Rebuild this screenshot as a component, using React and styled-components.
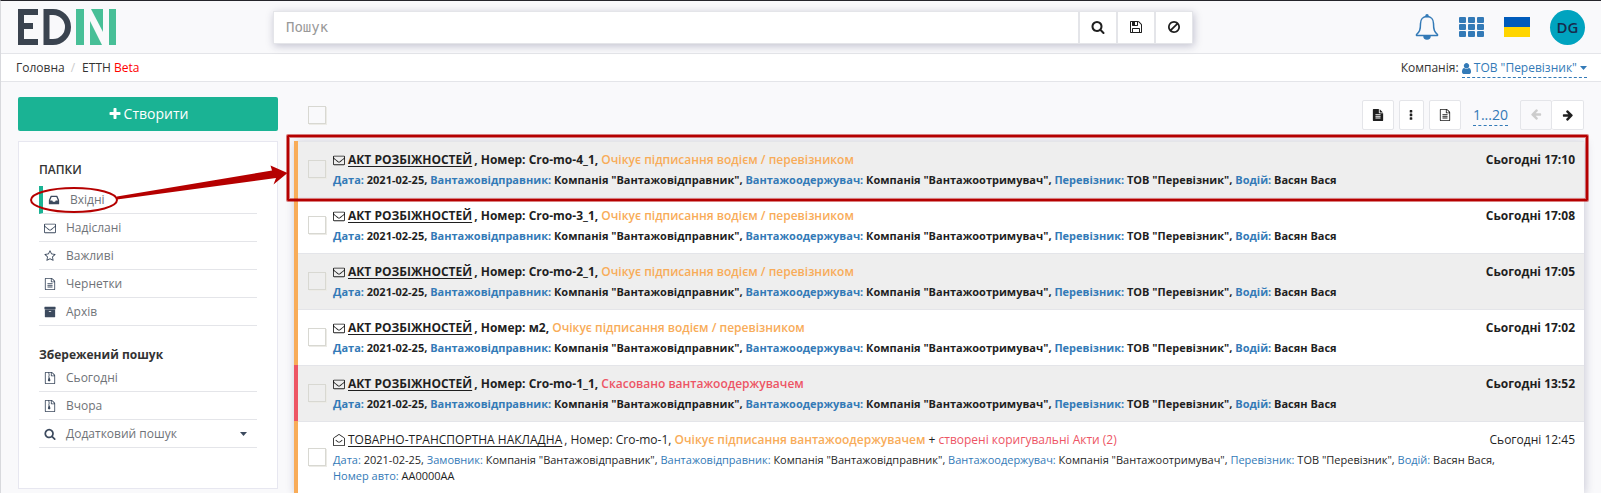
import React from "react";
import styled, { createGlobalStyle } from "styled-components";

const colors = {
  page: "#f9f9fb",
  line: "#e4e5e9",
  text: "#333333",
  dark: "#1f1f1f",
  link: "#337ab7",
  green: "#1ab394",
  orange: "#f8ac59",
  red: "#ed5565",
  mark: "#b50000",
};

const Global = createGlobalStyle`
  *, *::before, *::after { box-sizing: border-box; }
  body {
    margin: 0;
    background: ${colors.page};
    color: ${colors.text};
    font: 12px/20px "Open Sans", "Noto Sans", sans-serif;
  }
  button, input { font: inherit; color: inherit; margin: 0; }
  button { cursor: pointer; }
  ul { list-style: none; margin: 0; padding: 0; }
`;

/* ---------- icons ---------- */

const paths = {
  search:
    "M1216 832q0-185-131.5-316.5t-316.5-131.5-316.5 131.5-131.5 316.5 131.5 316.5 316.5 131.5 316.5-131.5 131.5-316.5zm512 832q0 52-38 90t-90 38q-54 0-90-38l-343-342q-179 124-399 124-143 0-273.5-55.5t-225-150-150-225-55.5-273.5 55.5-273.5 150-225 225-150 273.5-55.5 273.5 55.5 225 150 150 225 55.5 273.5q0 220-124 399l343 343q37 37 37 90z",
  save:
    "M512 1536h768v-384h-768v384zm896 0h128v-896q0-14-10-38.5t-20-34.5l-281-281q-10-10-34-20t-39-10v416q0 40-28 68t-68 28h-576q-40 0-68-28t-28-68v-416h-128v1280h128v-416q0-40 28-68t68-28h832q40 0 68 28t28 68v416zm-384-928v-320q0-13-9.5-22.5t-22.5-9.5h-192q-13 0-22.5 9.5t-9.5 22.5v320q0 13 9.5 22.5t22.5 9.5h192q13 0 22.5-9.5t9.5-22.5zm640 32v928q0 40-28 68t-68 28h-1344q-40 0-68-28t-28-68v-1344q0-40 28-68t68-28h928q40 0 88 20t76 48l280 280q28 28 48 76t20 88z",
  envelope:
    "M1664 1504v-768q-32 36-69 66-268 206-426 338-51 43-83 67t-86.5 48.5-102.5 24.5h-2q-48 0-102.5-24.5t-86.5-48.5-83-67q-158-132-426-338-37-30-69-66v768q0 13 9.5 22.5t22.5 9.5h1472q13 0 22.5-9.5t9.5-22.5zm0-1051v-24.5l-.5-13-3-12.5-5.5-9-9-7.5-14-2.5h-1472q-13 0-22.5 9.5t-9.5 22.5q0 168 147 284 193 152 401 317 6 5 35 29.5t46 37.5 44.5 31.5 50.5 27.5 43 9h2q20 0 43-9t50.5-27.5 44.5-31.5 46-37.5 35-29.5q208-165 401-317 54-43 100.5-115.5t46.5-131.5zm128-37v1088q0 66-47 113t-113 47h-1472q-66 0-113-47t-47-113v-1088q0-66 47-113t113-47h1472q66 0 113 47t47 113z",
  star:
    "M1201 1004l306-297-422-62-189-382-189 382-422 62 306 297-73 421 378-199 377 199zm527-357q0 22-26 48l-363 354 86 500q1 7 1 20 0 50-41 50-19 0-40-12l-449-236-449 236q-22 12-40 12-21 0-31.5-14.5t-10.5-35.5q0-6 2-20l86-500-364-354q-25-27-25-48 0-37 56-46l502-73 225-455q19-41 49-41t49 41l225 455 502 73q56 9 56 46z",
  inbox:
    "M1151 960h316q-1-3-2.5-8.5t-2.5-8.5l-212-496h-708l-212 496q-1 3-2.5 8.5t-2.5 8.5h316l95 192h320zm513 30v482q0 26-19 45t-45 19h-1408q-26 0-45-19t-19-45v-482q0-62 25-123l238-552q10-25 36.5-42t52.5-17h832q26 0 52.5 17t36.5 42l238 552q25 61 25 123z",
  archive:
    "M1088 832q0-26-19-45t-45-19h-256q-26 0-45 19t-19 45 19 45 45 19h256q26 0 45-19t19-45zm576-192v960q0 26-19 45t-45 19h-1408q-26 0-45-19t-19-45v-960q0-26 19-45t45-19h1408q26 0 45 19t19 45zm64-448v256q0 26-19 45t-45 19h-1536q-26 0-45-19t-19-45v-256q0-26 19-45t45-19h1536q26 0 45 19t19 45z",
  fileText:
    "M1596 476q14 14 28 36h-472v-472q22 14 36 28zm-476 164h544v1056q0 40-28 68t-68 28h-1344q-40 0-68-28t-28-68v-1600q0-40 28-68t68-28h800v544q0 40 28 68t68 28zm160 736v-64q0-14-9-23t-23-9h-704q-14 0-23 9t-9 23v64q0 14 9 23t23 9h704q14 0 23-9t9-23zm0-256v-64q0-14-9-23t-23-9h-704q-14 0-23 9t-9 23v64q0 14 9 23t23 9h704q14 0 23-9t9-23zm0-256v-64q0-14-9-23t-23-9h-704q-14 0-23 9t-9 23v64q0 14 9 23t23 9h704q14 0 23-9t9-23z",
  fileOutline:
    "M1596 380q28 28 48 76t20 88v1152q0 40-28 68t-68 28h-1344q-40 0-68-28t-28-68v-1600q0-40 28-68t68-28h896q40 0 88 20t76 48zm-444-244v376h376q-10-29-22-41l-313-313q-12-12-41-22zm384 1528v-1024h-416q-40 0-68-28t-28-68v-416h-768v1536h1280zm-1024-864q0-14 9-23t23-9h704q14 0 23 9t9 23v64q0 14-9 23t-23 9h-704q-14 0-23-9t-9-23v-64zm736 224q14 0 23 9t9 23v64q0 14-9 23t-23 9h-704q-14 0-23-9t-9-23v-64q0-14 9-23t23-9h704zm0 256q14 0 23 9t9 23v64q0 14-9 23t-23 9h-704q-14 0-23-9t-9-23v-64q0-14 9-23t23-9h704z",
  fileZip:
    "M1596 380q28 28 48 76t20 88v1152q0 40-28 68t-68 28h-1344q-40 0-68-28t-28-68v-1600q0-40 28-68t68-28h896q40 0 88 20t76 48zm-444-244v376h376q-10-29-22-41l-313-313q-12-12-41-22zm384 1528v-1024h-416q-40 0-68-28t-28-68v-416h-256v128h-128v-128h-384v1536h1280zM768 256h128v128h-128zM640 384h128v128h-128zM768 512h128v128h-128zM640 640h128v128h-128zM700 800h130l110 360q10 40 10 70 0 80-55 130t-127 50-127-50-55-130q0-30 10-70z",
  arrow:
    "M1600 960q0 54-37 91l-651 651q-39 37-91 37-51 0-90-37l-75-75q-38-38-38-91t38-91l293-293h-704q-52 0-84.5-37.5t-32.5-90.5v-128q0-53 32.5-90.5t84.5-37.5h704l-293-294q-38-36-38-90t38-90l75-75q38-38 90-38 53 0 91 38l651 651q37 35 37 90z",
  plus:
    "M1600 736v192q0 40-28 68t-68 28h-416v416q0 40-28 68t-68 28h-192q-40 0-68-28t-28-68v-416h-416q-40 0-68-28t-28-68v-192q0-40 28-68t68-28h416v-416q0-40 28-68t68-28h192q40 0 68 28t28 68v416h416q40 0 68 28t28 68z",
  dots:
    "M780 150h232q76 0 76 76v230q0 76-76 76h-232q-76 0-76-76v-230q0-76 76-76zM780 690h232q76 0 76 76v230q0 76-76 76h-232q-76 0-76-76v-230q0-76 76-76zM780 1230h232q76 0 76 76v230q0 76-76 76h-232q-76 0-76-76v-230q0-76 76-76z",
  ban:
    "M1440 893q0-161-87-295l-754 753q137 89 297 89 111 0 211.500-43.500t173.500-116.500 116-174.500 43-212.500zm-999 299l755-754q-135-91-300-91-148 0-273 73t-198 199-73 274q0 162 89 299zm1223-299q0 157-61 300t-163.500 246-245 164-298.500 61-298.500-61-245-164-163.500-246-61-300 61-299.500 163.500-245.500 245-164 298.500-61 298.500 61 245 164 163.500 245.500 61 299.500z",
  user:
    "M1536 1399q0 109-62.500 187t-150.500 78h-854q-88 0-150.500-78t-62.500-187q0-85 8.500-160.500t31.500-152 58.500-131 94-89 134.500-34.500q131 128 313 128t313-128q76 0 134.500 34.500t94 89 58.500 131 31.500 152 8.500 160.500zm-256-887q0 159-112.500 271.500t-271.500 112.500-271.500-112.500-112.500-271.500 112.500-271.500 271.500-112.500 271.500 112.500 112.500 271.500z",
  open:
    "M896 0q40 0 76 22 330 206 650 445 74 56 122 122 48 66 48 150v893q0 66-47 113t-113 47h-1472q-66 0-113-47t-47-113v-893q0-84 48-150 48-66 122-122 320-239 650-445 36-22 76-22zM896 128q-20 0-40 14-320 200-620 424-108 80-108 170v896q0 32 32 32h1472q32 0 32-32v-896q0-90-108-170-300-224-620-424-20-14-40-14zM372 960l66-90 330 242q128 88 256 0l330-242 66 90-340 262q-184 130-368 0z",
};

const Svg = styled.svg`
  display: inline-block;
  flex: none;
  vertical-align: -2px;
  fill: currentColor;
`;

function Icon({ name, size = 14, ...rest }) {
  return (
    <Svg viewBox="0 0 1792 1792" width={size} height={size} aria-hidden="true" {...rest}>
      <path fillRule={name === "open" ? "evenodd" : "nonzero"} d={paths[name]} />
    </Svg>
  );
}

const FlippedIcon = styled(Icon)`
  transform: rotate(180deg);
`;

const CaretSvg = styled(Svg)`
  vertical-align: 2px;
`;

function Caret() {
  return (
    <CaretSvg width="7" height="4" viewBox="0 0 7 4" aria-hidden="true">
      <path d="M0 0h7L3.500 4z" />
    </CaretSvg>
  );
}

function Logo() {
  return (
    <svg width="98" height="36" viewBox="0 0 98 36" role="img" aria-label="EDIN">
      <g fill="#3a434f">
        <rect width="6" height="36" />
        <rect width="20" height="6" />
        <rect y="14" width="15" height="6" />
        <rect y="30" width="20" height="6" />
      </g>
      <path d="M28.500 3H35a15 15 0 0 1 0 30h-6.500z" fill="none" stroke="#3a434f" strokeWidth="6" />
      <g fill="#48bf97">
        <rect x="58" width="8" height="36" />
        <rect x="91" width="7" height="36" />
        <polygon points="73,0 85,0 85,23" />
        <polygon points="72,12 84,36 72,36" />
      </g>
    </svg>
  );
}

function Bell() {
  return (
    <svg width="24" height="26" viewBox="0 0 24 26" fill="none" stroke="currentColor" strokeWidth="1.500" aria-hidden="true">
      <path d="M12 2.500c-4 0-6.500 3-6.500 7C5.500 16 4.500 18 1.500 20.500v1h21v-1c-3-2.500-4-4.500-4-11 0-4-2.500-7-6.500-7z" strokeLinejoin="round" />
      <circle cx="12" cy="1.800" r="1" fill="currentColor" />
      <path d="M9 22a3 3 0 0 0 6 0z" fill="currentColor" />
    </svg>
  );
}

function Apps() {
  return (
    <svg width="25" height="20" viewBox="0 0 25 20" fill="currentColor" aria-hidden="true">
      {[0, 9, 18].map((x) => [0, 7, 14].map((y) => <rect key={`${x}-${y}`} x={x} y={y} width="7" height="6" rx="1" />))}
    </svg>
  );
}

function Flag() {
  return (
    <svg width="26" height="20" viewBox="0 0 26 20" role="img" aria-label="Українська">
      <rect width="26" height="10" fill="#005bbb" />
      <rect y="10" width="26" height="10" fill="#ffd500" />
    </svg>
  );
}

/* ---------- header ---------- */

const Page = styled.div`
  border-top: 1px solid #25252b;
  border-left: 1px solid #d8d9dd;
`;

const Header = styled.header`
  display: grid;
  grid-template-columns: 255px minmax(300px, 920px) 1fr;
  align-items: center;
  height: 53px;
  padding: 0 16px 0 17px;
  border-bottom: 1px solid ${colors.line};
`;

const LogoLink = styled.a`
  display: flex;
`;

const SearchForm = styled.form`
  display: flex;
  height: 33px;
  background: #fff;
  border: 1px solid ${colors.line};
  box-shadow: 1px 2px 8px rgba(30, 30, 80, 0.25);
`;

const SearchInput = styled.input`
  flex: 1;
  min-width: 0;
  padding: 0 12px;
  border: 0;
  outline: 0;
  background: none;
  font: 14px/20px "DejaVu Sans Mono", monospace;
  &::placeholder { color: #999; opacity: 1; }
`;

const SearchButton = styled.button`
  display: grid;
  place-items: center;
  width: 38px;
  padding: 0;
  border: 0;
  border-left: 2px solid ${colors.line};
  background: none;
  color: ${colors.dark};
`;

const HeaderActions = styled.nav`
  display: flex;
  justify-content: flex-end;
  align-items: center;
  gap: 20px;
  color: ${colors.link};
`;

const PlainButton = styled.button`
  display: flex;
  padding: 0;
  border: 0;
  background: none;
  color: inherit;
`;

const Avatar = styled(PlainButton)`
  justify-content: center;
  align-items: center;
  width: 35px;
  height: 35px;
  border-radius: 50%;
  background: #00a3bf;
  color: #172b4d;
  font-size: 15px;
  font-weight: 600;
`;

const SubHeader = styled.div`
  display: flex;
  justify-content: space-between;
  align-items: center;
  height: 28px;
  padding: 0 14px 0 15px;
  border-bottom: 1px solid ${colors.line};
  background: #fff;
`;

const Crumbs = styled.nav`
  display: flex;
  a { color: inherit; text-decoration: none; }
`;

const CrumbSlash = styled.span`
  padding: 0 7px 0 6px;
  color: #ccc;
`;

const Beta = styled.span`
  color: #ff0000;
`;

const DashedLink = styled.a`
  display: inline-block;
  border-bottom: 1px dashed ${colors.link};
  color: ${colors.link};
  font-size: ${(p) => (p.$large ? "14px" : "inherit")};
  line-height: ${(p) => (p.$large ? "20px" : "18px")};
  text-decoration: none;
`;

/* ---------- sidebar ---------- */

const Content = styled.div`
  position: relative;
  display: grid;
  grid-template-columns: 260px minmax(0, 1fr);
  gap: 16px;
  padding: 15px 17px 0;
`;

const CreateButton = styled.button`
  display: flex;
  justify-content: center;
  align-items: center;
  gap: 2px;
  width: 100%;
  height: 34px;
  margin-bottom: 10px;
  border: 0;
  border-radius: 2px;
  background: ${colors.green};
  color: #fff;
  font-size: 14px;
`;

const Card = styled.aside`
  padding: 16px 20px 40px;
  border: 1px solid #e7e7f0;
  background: #fff;
`;

const Heading = styled.h2`
  margin: 0;
  padding: 2px 0 6px;
  font-size: 12px;
  line-height: 20px;
  font-weight: ${(p) => (p.$strong ? 700 : 600)};
  color: ${colors.text};
`;

const FolderList = styled.ul`
  & + ${Heading} {
    padding: 20px 0 0;
    line-height: 18px;
  }
`;

const Folder = styled.a`
  display: flex;
  align-items: center;
  gap: 10px;
  height: 28px;
  padding-left: 5px;
  padding-right: 10px;
  border-bottom: 1px solid ${colors.line};
  border-left: ${(p) => (p.$active ? `4px solid ${colors.green}` : "0")};
  color: #6f7378;
  text-decoration: none;
  ${Svg} { color: #3c4a5e; }
`;

const FolderName = styled.span`
  flex: 1;
`;

/* ---------- messages ---------- */

const Toolbar = styled.div`
  display: flex;
  justify-content: space-between;
  align-items: center;
  height: 30px;
  margin: 3px 0 11px;
  padding-left: 14px;
`;

const Tools = styled.div`
  display: flex;
  align-items: center;
  gap: 5px;
`;

const ToolButton = styled.button`
  display: grid;
  place-items: center;
  width: ${(p) => (p.$narrow ? "25px" : "32px")};
  height: 30px;
  padding: 0;
  border: 1px solid ${colors.line};
  border-radius: 2px;
  background: #fff;
  color: ${(p) => (p.disabled ? "#ccc" : colors.dark)};
`;

const Pager = styled.div`
  display: flex;
  ${ToolButton} + ${ToolButton} { border-left: 0; }
  ${ToolButton}:disabled { background: ${colors.page}; }
`;

const PageRange = styled.div`
  padding: 0 7px;
`;

const Checkbox = styled.input.attrs({ type: "checkbox" })`
  appearance: none;
  width: 18px;
  height: 18px;
  border: 1px solid #d8d8d2;
  box-shadow: 1px 1px 0 #ecebe6;
  background: transparent;
`;

const Messages = styled.ul`
  background: #fff;
  box-shadow: 1px 1px 9px rgba(30, 30, 80, 0.22);
`;

const Row = styled.li`
  position: relative;
  display: flex;
  border-top: 1px solid ${colors.line};
  background: ${(p) => (p.$shaded ? "#eeeeee" : "#ffffff")};
  font-weight: ${(p) => (p.$unread ? 700 : 400)};
  color: ${colors.dark};
`;

const Stripe = styled.span`
  flex: none;
  width: 4px;
  margin-top: -1px;
  background: ${(p) => p.$color};
`;

const RowBody = styled.div`
  flex: 1;
  display: flex;
  align-items: center;
  gap: 7px;
  min-width: 0;
  padding: 8px 9px 9px 10px;
`;

const RowText = styled.div`
  flex: 1;
  min-width: 0;
`;

const TitleLine = styled.div`
  display: flex;
  justify-content: space-between;
  margin-bottom: 2px;
`;

const DocLink = styled.a`
  margin: 0 2px 0 3px;
  color: inherit;
  text-underline-offset: 2px;
`;

const Status = styled.span`
  color: ${(p) => p.$color};
  font-weight: ${(p) => (p.$light ? 400 : 600)};
`;

const Details = styled.div`
  padding-right: 60px;
  font-size: 11px;
  line-height: 16px;
`;

const Label = styled.span`
  color: ${colors.link};
`;

const Highlight = styled.div`
  position: absolute;
  inset: -7px -4px -4px -7px;
  border: 2px solid ${colors.mark};
  border-radius: 1px;
  box-shadow: 0 0 0 1px rgba(181, 0, 0, 0.5), inset 0 0 0 1px rgba(181, 0, 0, 0.5);
  pointer-events: none;
  z-index: 1;
`;

const Pointer = styled.svg`
  position: absolute;
  top: 78px;
  left: 29px;
  pointer-events: none;
  z-index: 2;
`;

const folders = [
  { icon: "inbox", name: "Вхідні", active: true },
  { icon: "envelope", name: "Надіслані" },
  { icon: "star", name: "Важливі" },
  { icon: "fileOutline", name: "Чернетки" },
  { icon: "archive", name: "Архів" },
];

const searches = [
  { icon: "fileZip", name: "Сьогодні" },
  { icon: "fileZip", name: "Вчора" },
  { icon: "search", name: "Додатковий пошук", expandable: true },
];

const actDetails = [
  ["Дата", "2021-02-25"],
  ["Вантажовідправник", 'Компанія "Вантажовідправник"'],
  ["Вантажоодержувач", 'Компанія "Вантажоотримувач"'],
  ["Перевізник", 'ТОВ "Перевізник"'],
  ["Водій", "Васян Вася"],
];

const waiting = "Очікує підписання водієм / перевізником";

const act = (number, time, status = waiting, color = colors.orange) => ({
  title: "АКТ РОЗБІЖНОСТЕЙ",
  number,
  time,
  status,
  color,
  unread: true,
  details: actDetails,
});

const messages = [
  act("Cro-mo-4_1", "Сьогодні 17:10"),
  act("Cro-mo-3_1", "Сьогодні 17:08"),
  act("Cro-mo-2_1", "Сьогодні 17:05"),
  act("м2", "Сьогодні 17:02"),
  act("Cro-mo-1_1", "Сьогодні 13:52", "Скасовано вантажоодержувачем", colors.red),
  {
    title: "ТОВАРНО-ТРАНСПОРТНА НАКЛАДНА",
    number: "Cro-mo-1",
    time: "Сьогодні 12:45",
    status: "Очікує підписання вантажоодержувачем",
    extra: "створені коригувальні Акти (2)",
    color: colors.orange,
    details: [
      ["Дата", "2021-02-25"],
      ["Замовник", 'Компанія "Вантажовідправник"'],
      ["Вантажовідправник", 'Компанія "Вантажовідправник"'],
      ["Вантажоодержувач", 'Компанія "Вантажоотримувач"'],
      ["Перевізник", 'ТОВ "Перевізник"'],
      ["Водій", "Васян Вася"],
      ["Номер авто", "АА0000АА"],
    ],
  },
];

function Folders({ items }) {
  return (
    <FolderList>
      {items.map((f) => (
        <li key={f.name}>
          <Folder href="#" $active={f.active}>
            <Icon name={f.icon} size={12} />
            <FolderName>{f.name}</FolderName>
            {f.expandable && <Caret />}
          </Folder>
        </li>
      ))}
    </FolderList>
  );
}

function Message({ item, index }) {
  return (
    <Row $shaded={index % 2 === 0 && item.unread} $unread={item.unread}>
      <Stripe $color={item.color} />
      <RowBody>
        <Checkbox aria-label={`${item.title} ${item.number}`} />
        <RowText>
          <TitleLine>
            <span>
              <Icon name={item.unread ? "envelope" : "open"} size={12} />
              <DocLink href="#">{item.title}</DocLink>, Номер: {item.number},{" "}
              <Status $color={item.color}>{item.status}</Status>
              {item.extra && (
                <>
                  {" + "}
                  <Status $color={colors.red} $light>{item.extra}</Status>
                </>
              )}
            </span>
            <time>{item.time}</time>
          </TitleLine>
          <Details>
            {item.details.map(([label, value], i) => (
              <React.Fragment key={label}>
                <Label>{label}:</Label> {value}
                {i < item.details.length - 1 && ", "}
              </React.Fragment>
            ))}
          </Details>
        </RowText>
      </RowBody>
      {index === 0 && <Highlight />}
    </Row>
  );
}

export default function App() {
  return (
    <Page>
      <Global />
      <Header>
        <LogoLink href="#">
          <Logo />
        </LogoLink>
        <SearchForm role="search">
          <SearchInput placeholder="Пошук" aria-label="Пошук" />
          <SearchButton type="button" aria-label="Шукати"><Icon name="search" /></SearchButton>
          <SearchButton type="button" aria-label="Зберегти"><Icon name="save" /></SearchButton>
          <SearchButton type="button" aria-label="Скинути"><Icon name="ban" /></SearchButton>
        </SearchForm>
        <HeaderActions>
          <PlainButton aria-label="Сповіщення"><Bell /></PlainButton>
          <PlainButton aria-label="Сервіси"><Apps /></PlainButton>
          <PlainButton aria-label="Мова"><Flag /></PlainButton>
          <Avatar>DG</Avatar>
        </HeaderActions>
      </Header>
      <SubHeader>
        <Crumbs>
          <a href="#">Головна</a>
          <CrumbSlash>/</CrumbSlash>
          <span>ЕТТН <Beta>Beta</Beta></span>
        </Crumbs>
        <div>
          Компанія:{" "}
          <DashedLink href="#">
            <Svg viewBox="256 128 1280 1536" width="9" height="11" aria-hidden="true">
              <path d={paths.user} />
            </Svg>{" "}
            ТОВ "Перевізник" <Caret />
          </DashedLink>
        </div>
      </SubHeader>
      <Content>
        <div>
          <CreateButton><Icon name="plus" />Створити</CreateButton>
          <Card>
            <Heading>ПАПКИ</Heading>
            <Folders items={folders} />
            <Heading $strong>Збережений пошук</Heading>
            <Folders items={searches} />
          </Card>
        </div>
        <main>
          <Toolbar>
            <Checkbox aria-label="Вибрати всі" />
            <Tools>
              <ToolButton aria-label="Документ"><Icon name="fileText" size={12} /></ToolButton>
              <ToolButton $narrow aria-label="Більше"><Icon name="dots" size={12} /></ToolButton>
              <ToolButton aria-label="Звіт"><Icon name="fileOutline" size={12} /></ToolButton>
              <PageRange><DashedLink href="#" $large>1...20</DashedLink></PageRange>
              <Pager>
                <ToolButton disabled aria-label="Назад"><FlippedIcon name="arrow" size={12} /></ToolButton>
                <ToolButton aria-label="Вперед"><Icon name="arrow" size={12} /></ToolButton>
              </Pager>
            </Tools>
          </Toolbar>
          <Messages>
            {messages.map((m, i) => (
              <Message key={m.number} item={m} index={i} />
            ))}
          </Messages>
        </main>
        <Pointer width="260" height="60" viewBox="0 0 260 60" aria-hidden="true">
          <ellipse cx="44" cy="40" rx="43" ry="12" fill="none" stroke={colors.mark} strokeWidth="2" />
          <path d="M87 36.500L242 10.500 240.500 5.500 257.500 13 243.500 24.500 246 18 87 39.500z" fill={colors.mark} />
        </Pointer>
      </Content>
    </Page>
  );
}
